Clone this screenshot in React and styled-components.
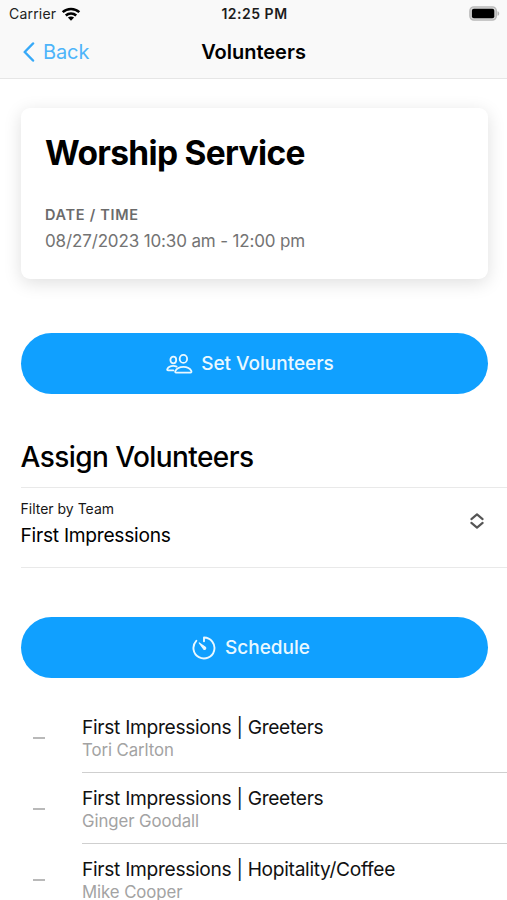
import React from "react";
import styled, { createGlobalStyle } from "styled-components";

const GlobalStyle = createGlobalStyle`
  *, *::before, *::after { box-sizing: border-box; }
  body { margin: 0; background: #fff; }
`;

const Screen = styled.div`
  height: 900px;
  overflow: hidden;
  display: flex;
  flex-direction: column;
  background: #fff;
  color: #000;
  font-family: Inter, "Liberation Sans", sans-serif;
`;

const Header = styled.header`
  flex: none;
  height: 79px;
  background: #f9f9f9;
  border-bottom: 1px solid #e6e6e6;
`;

const StatusBar = styled.div`
  display: grid;
  grid-template-columns: 1fr auto 1fr;
  align-items: center;
  height: 27px;
  padding: 0 7px 0 9px;
`;

const Carrier = styled.div`
  display: flex;
  align-items: center;
  gap: 5px;
  font-size: 14px;
  letter-spacing: 0.2px;
  color: #222;
`;

const Clock = styled.div`
  font-size: 14px;
  font-weight: 600;
  letter-spacing: 0.5px;
  color: #1c1c1c;
`;

const BatterySlot = styled.div`
  display: flex;
  justify-content: flex-end;
`;

const NavBar = styled.nav`
  display: grid;
  grid-template-columns: 1fr auto 1fr;
  align-items: center;
  height: 49px;
  padding: 0 22px;
`;

const BackButton = styled.button`
  display: flex;
  align-items: center;
  gap: 8px;
  justify-self: start;
  padding: 0;
  border: 0;
  background: none;
  font: inherit;
  font-size: 20px;
  line-height: 24px;
  letter-spacing: -0.1px;
  color: #4db4fa;
`;

const NavTitle = styled.h1`
  margin: 0;
  font-size: 20px;
  line-height: 24px;
  font-weight: 600;
`;

const Content = styled.main`
  flex: 1;
  min-height: 0;
  padding-top: 29px;
`;

const Card = styled.section`
  height: 171px;
  margin: 0 19.5px 0 20.5px;
  padding: 24px 24.5px 0;
  border-radius: 9px;
  background: #fff;
  box-shadow: 0 4px 18px rgba(0, 0, 0, 0.13);
`;

const CardTitle = styled.h2`
  margin: 0 0 32px;
  font-size: 33.5px;
  line-height: 42px;
  font-weight: 700;
  letter-spacing: -0.68px;
`;

const CardLabel = styled.div`
  font-size: 14.5px;
  line-height: 18px;
  font-weight: 600;
  letter-spacing: 0.7px;
  color: #6b6b6b;
`;

const CardValue = styled.div`
  margin-top: 6px;
  font-size: 17px;
  line-height: 22px;
  letter-spacing: -0.14px;
  color: #737373;
`;

const ActionButton = styled.button`
  display: flex;
  align-items: center;
  justify-content: center;
  gap: ${(p) => p.$gap}px;
  width: calc(100% - 40px);
  height: 60.5px;
  margin: ${(p) => p.$top}px 20px 0 20.5px;
  padding: 1px ${(p) => p.$right}px 0 0;
  border: 0;
  border-radius: 31px;
  background: #10a0ff;
  color: #e9f8ff;
  font: inherit;
  font-size: 19px;
  font-weight: 500;
`;

const SectionTitle = styled.h2`
  margin: 46px 0 0 20.5px;
  font-size: 28px;
  line-height: 34px;
  font-weight: 500;
  letter-spacing: -0.57px;
`;

const FilterRow = styled.div`
  display: flex;
  align-items: flex-start;
  justify-content: space-between;
  height: 81.5px;
  margin: 13px 0 0 20.5px;
  padding: 12.5px 23.5px 0 0;
  border-top: 1px solid #e9e9e9;
  border-bottom: 1px solid #e9e9e9;
`;

const FilterLabel = styled.div`
  font-size: 14px;
  line-height: 18px;
  color: #161616;
`;

const FilterValue = styled.div`
  margin-top: 4.5px;
  font-size: 19.2px;
  line-height: 24px;
  letter-spacing: -0.27px;
`;

const SelectorSlot = styled.div`
  padding-top: 13px;
  line-height: 0;
`;

const List = styled.ul`
  list-style: none;
  margin: 24px 0 0;
  padding: 0;
`;

const ListRow = styled.li`
  display: flex;
  height: 71.4px;
`;

const DashSlot = styled.div`
  flex: none;
  width: 82px;
  padding: 35px 0 0 33px;
`;

const Dash = styled.div`
  width: 12px;
  height: 2px;
  background: #b9b9b9;
`;

const RowBody = styled.div`
  flex: 1;
  padding-top: 13px;
  border-bottom: 1px solid #cfcfcf;
`;

const RowTitle = styled.div`
  font-size: 19.2px;
  line-height: 24px;
  letter-spacing: -0.31px;
  white-space: nowrap;
  color: #111;
`;

const RowName = styled.div`
  font-size: 16.8px;
  line-height: 22px;
  letter-spacing: -0.08px;
  color: #a3a3a3;
`;

const assignments = [
  { role: "First Impressions | Greeters", name: "Tori Carlton" },
  { role: "First Impressions | Greeters", name: "Ginger Goodall" },
  { role: "First Impressions | Hopitality/Coffee", name: "Mike Cooper" },
];

const WifiIcon = () => (
  <svg width="20" height="14" viewBox="0 0 20 14" fill="none" stroke="#000" strokeWidth="2.5">
    <path d="M1.7 5.2C6.2.9 13.8.9 18.3 5.2" />
    <path d="M4.8 8.5c2.9-2.8 7.5-2.8 10.4 0" />
    <path d="M10 13.7 6.9 10.6c1.7-1.6 4.5-1.6 6.2 0z" fill="#000" stroke="none" />
  </svg>
);

const BatteryIcon = () => (
  <svg width="31" height="15" viewBox="0 0 31 15">
    <rect x="0.9" y="0.9" width="26.4" height="13.2" rx="4" fill="#d4d4d4" stroke="#b8b8b8" strokeWidth="1.4" />
    <rect x="2.9" y="2.8" width="22.4" height="9.4" rx="2" fill="#000" />
    <path d="M28.5 5.2c2.3.7 2.3 3.9 0 4.6z" fill="#b4b4b4" />
  </svg>
);

const BackIcon = () => (
  <svg width="13" height="20" viewBox="0 0 13 20" fill="none" stroke="#36a9f8" strokeWidth="2.5" strokeLinecap="round" strokeLinejoin="round">
    <path d="M11 1.5 2.7 10l8.3 8.5" />
  </svg>
);

const PeopleIcon = () => (
  <svg width="27" height="20" viewBox="0 0 27 20" fill="none" stroke="currentColor" strokeWidth="1.8" strokeLinejoin="round" strokeLinecap="round">
    <ellipse cx="17.4" cy="4.9" rx="3.7" ry="4" />
    <path d="M10.2 18.6c-1 0-1.2-.8-.8-1.7 1.3-2.5 4.2-4.1 8-4.1s6.7 1.6 7.9 4.1c.4.9.1 1.7-.9 1.7z" />
    <ellipse cx="7.3" cy="6" rx="2.9" ry="3.3" />
    <path d="M10.6 12.6c-1-.5-2.1-.7-3.4-.7-3 0-5 1.3-5.9 3.2-.3.8 0 1.3.8 1.3h5.2" />
  </svg>
);

const TimerIcon = () => (
  <svg width="24" height="24" viewBox="0 0 24 24" fill="none" stroke="currentColor" strokeWidth="1.9" strokeLinecap="round" strokeLinejoin="round">
    <path d="M12 5.2V1.5a10.5 10.5 0 1 1-7.7 3.3" />
    <path d="m7.2 6.9 6.1 4.3c1.3 1-.2 3-1.5 2z" fill="currentColor" strokeWidth="1.1" />
  </svg>
);

const SelectorIcon = () => (
  <svg width="14" height="16" viewBox="0 0 14 16" fill="none" stroke="#555" strokeWidth="2.1" strokeLinecap="round" strokeLinejoin="round">
    <path d="m1.4 6.1 5.6-4.7 5.6 4.7M1.4 9.9 7 14.6l5.6-4.7" />
  </svg>
);

export default function App() {
  return (
    <Screen>
      <GlobalStyle />
      <Header>
        <StatusBar>
          <Carrier>Carrier<WifiIcon /></Carrier>
          <Clock>12:25 PM</Clock>
          <BatterySlot><BatteryIcon /></BatterySlot>
        </StatusBar>
        <NavBar>
          <BackButton><BackIcon />Back</BackButton>
          <NavTitle>Volunteers</NavTitle>
        </NavBar>
      </Header>
      <Content>
        <Card>
          <CardTitle>Worship Service</CardTitle>
          <CardLabel>DATE / TIME</CardLabel>
          <CardValue>08/27/2023 10:30 am - 12:00 pm</CardValue>
        </Card>
        <ActionButton $top={54} $gap={8} $right={8}><PeopleIcon />Set Volunteers</ActionButton>
        <SectionTitle>Assign Volunteers</SectionTitle>
        <FilterRow>
          <div>
            <FilterLabel>Filter by Team</FilterLabel>
            <FilterValue>First Impressions</FilterValue>
          </div>
          <SelectorSlot><SelectorIcon /></SelectorSlot>
        </FilterRow>
        <ActionButton $top={49} $gap={9} $right={6}><TimerIcon />Schedule</ActionButton>
        <List>
          {assignments.map((a, i) => (
            <ListRow key={i}>
              <DashSlot><Dash /></DashSlot>
              <RowBody>
                <RowTitle>{a.role}</RowTitle>
                <RowName>{a.name}</RowName>
              </RowBody>
            </ListRow>
          ))}
        </List>
      </Content>
    </Screen>
  );
}
